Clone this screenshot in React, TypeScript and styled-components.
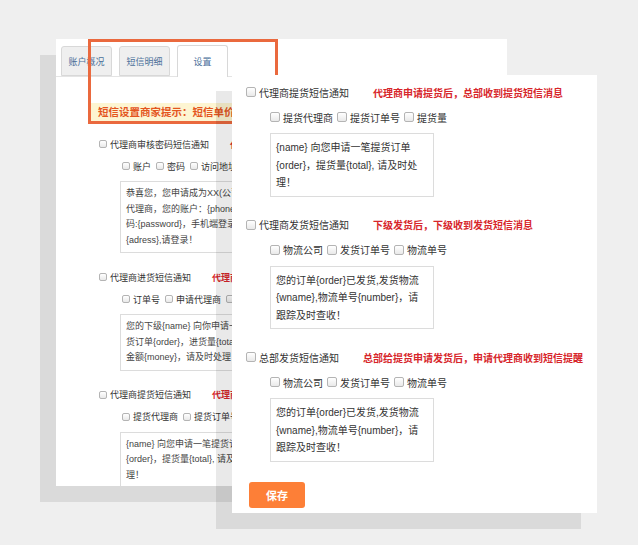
import React from "react";
import styled, { createGlobalStyle } from "styled-components";

type Size = "sm" | "md";

const GlobalStyle = createGlobalStyle`
  html, body { margin: 0; padding: 0; background: #efefef; }
  body { font-family: "Liberation Sans", "Noto Sans CJK SC", sans-serif; }
  * { box-sizing: border-box; }
`;

const Canvas = styled.div`
  position: relative;
  width: 638px;
  height: 545px;
  overflow: hidden;
  background: #efefef;
`;

const Watermark = styled.span<{ $x: number; $y: number }>`
  position: absolute;
  left: ${(p) => p.$x}px;
  top: ${(p) => p.$y}px;
  font-size: 28px;
  font-weight: bold;
  color: rgba(0, 0, 0, 0.022);
  transform: rotate(-32deg);
  font-family: "Noto Sans CJK SC", sans-serif;
  pointer-events: none;
`;

const Window = styled.div<{ $x: number; $y: number; $w: number; $h: number; $z: number }>`
  position: absolute;
  left: ${(p) => p.$x}px;
  top: ${(p) => p.$y}px;
  width: ${(p) => p.$w}px;
  height: ${(p) => p.$h}px;
  z-index: ${(p) => p.$z};
  background: #fff;
  overflow: hidden;
  box-shadow: -16px 16px 0 rgba(0, 0, 0, 0.085);
`;

const TabBar = styled.div`
  display: flex;
  align-items: flex-end;
  gap: 7px;
  height: 38px;
  padding-left: 5px;
  border-bottom: 1px solid #e4e4e4;
`;

const Tab = styled.div<{ $active?: boolean }>`
  width: 51px;
  height: ${(p) => (p.$active ? 32 : 30)}px;
  margin-bottom: ${(p) => (p.$active ? -1 : 0)}px;
  display: flex;
  align-items: center;
  justify-content: center;
  border: 1px solid #d8d8d8;
  border-bottom: ${(p) => (p.$active ? "none" : "1px solid #d8d8d8")};
  border-radius: 3px 3px 0 0;
  background: ${(p) => (p.$active ? "#fff" : "#efefef")};
  color: #4b6f9a;
  font-size: 9px;
`;

const HighlightFrame = styled.div`
  position: absolute;
  left: 32px;
  top: 0;
  width: 190px;
  height: 85px;
  border: 3px solid #ea693e;
  z-index: 2;
`;

const Notice = styled.div`
  margin: 26px 0 0 34px;
  height: 18px;
  line-height: 18px;
  padding-left: 8px;
  background: #fdf5d2;
  color: #e4561e;
  font-size: 10.5px;
  font-weight: bold;
  white-space: nowrap;
`;

const Sections = styled.div<{ $size: Size }>`
  display: flex;
  flex-direction: column;
  gap: ${(p) => (p.$size === "sm" ? 18 : 21)}px;
  padding-left: ${(p) => (p.$size === "sm" ? 43 : 14)}px;
  margin-top: ${(p) => (p.$size === "sm" ? 17 : 10)}px;
`;

const Section = styled.div`
  display: flex;
  flex-direction: column;
  align-items: flex-start;
`;

const Row = styled.div<{ $size: Size }>`
  display: flex;
  align-items: center;
  height: ${(p) => (p.$size === "sm" ? 12 : 14)}px;
  font-size: ${(p) => (p.$size === "sm" ? 9 : 10)}px;
  color: #333;
  white-space: nowrap;
`;

const SubRow = styled(Row)`
  margin-top: ${(p) => (p.$size === "sm" ? 10 : 11)}px;
  margin-left: ${(p) => (p.$size === "sm" ? 23 : 24)}px;
`;

const Check = styled.span<{ $size: Size }>`
  display: inline-block;
  flex: none;
  width: ${(p) => (p.$size === "sm" ? 8 : 10)}px;
  height: ${(p) => (p.$size === "sm" ? 8 : 10)}px;
  border: 1px solid #b4b4b4;
  border-radius: 2px;
  background: linear-gradient(#ffffff, #e9e9e9);
  margin-right: 3px;
`;

const Option = styled.span<{ $size: Size }>`
  display: inline-flex;
  align-items: center;
  margin-right: ${(p) => (p.$size === "sm" ? 5 : 4)}px;
`;

const Hint = styled.span<{ $size: Size }>`
  margin-left: ${(p) => (p.$size === "sm" ? 21 : 24)}px;
  color: #d7262b;
  font-weight: bold;
`;

const TextBox = styled.div<{ $size: Size }>`
  margin-top: 9px;
  margin-left: ${(p) => (p.$size === "sm" ? 21 : 24)}px;
  width: ${(p) => (p.$size === "sm" ? 160 : 164)}px;
  padding: ${(p) => (p.$size === "sm" ? "4px 5px" : "5px 5px 4px")};
  border: 1px solid #dcdcdc;
  font-size: ${(p) => (p.$size === "sm" ? 9 : 10)}px;
  line-height: ${(p) => (p.$size === "sm" ? 15.5 : 17.5)}px;
  color: ${(p) => (p.$size === "sm" ? "#444" : "#333")};
  white-space: nowrap;
  overflow: hidden;
`;

const SaveButton = styled.button`
  margin: 20px 0 0 17px;
  width: 56px;
  height: 26px;
  border: none;
  border-radius: 3px;
  background: #fd7f37;
  color: #fff;
  font-family: "Liberation Sans", "Noto Sans CJK SC", sans-serif;
  font-size: 11px;
  font-weight: bold;
  padding: 0;
`;

type SectionData = {
  title: string;
  hint: string;
  options: string[];
  lines: string[];
};

const backSections: SectionData[] = [
  {
    title: "代理商审核密码短信通知",
    hint: "代理商审核通过后，代理商收到短信通知",
    options: ["账户", "密码", "访问地址"],
    lines: [
      "恭喜您，您申请成为XX(公司)的",
      "代理商，您的账户：{phone}，密",
      "码:{password}，手机端登录地址",
      "{adress},请登录！",
    ],
  },
  {
    title: "代理商进货短信通知",
    hint: "代理商申请进货后，上级收到短信",
    options: ["订单号", "申请代理商", "进货量"],
    lines: [
      "您的下级{name} 向你申请一笔进",
      "货订单{order}，进货量{total}，",
      "金额{money}，请及时处理！",
    ],
  },
  {
    title: "代理商提货短信通知",
    hint: "代理商申请提货后，总部收到提货短信消息",
    options: ["提货代理商", "提货订单号", "提货量"],
    lines: ["{name} 向您申请一笔提货订单", "{order}，提货量{total}, 请及时处", "理！"],
  },
];

const shipLines = ["您的订单{order}已发货,发货物流", "{wname},物流单号{number}，请", "跟踪及时查收！"];

const frontSections: SectionData[] = [
  {
    title: "代理商提货短信通知",
    hint: "代理商申请提货后，总部收到提货短信消息",
    options: ["提货代理商", "提货订单号", "提货量"],
    lines: ["{name} 向您申请一笔提货订单", "{order}，提货量{total}, 请及时处", "理！"],
  },
  {
    title: "代理商发货短信通知",
    hint: "下级发货后，下级收到发货短信消息",
    options: ["物流公司", "发货订单号", "物流单号"],
    lines: shipLines,
  },
  {
    title: "总部发货短信通知",
    hint: "总部给提货申请发货后，申请代理商收到短信提醒",
    options: ["物流公司", "发货订单号", "物流单号"],
    lines: shipLines,
  },
];

function SmsSection({ data, size }: { data: SectionData; size: Size }) {
  return (
    <Section>
      <Row $size={size}>
        <Check $size={size} />
        <span>{data.title}</span>
        <Hint $size={size}>{data.hint}</Hint>
      </Row>
      <SubRow $size={size}>
        {data.options.map((o) => (
          <Option key={o} $size={size}>
            <Check $size={size} />
            {o}
          </Option>
        ))}
      </SubRow>
      <TextBox $size={size}>
        {data.lines.map((l, i) => (
          <div key={i}>{l}</div>
        ))}
      </TextBox>
    </Section>
  );
}

export default function App() {
  return (
    <>
      <GlobalStyle />
      <Canvas>
        <Watermark $x={602} $y={86}>微</Watermark>
        <Watermark $x={602} $y={246}>微</Watermark>
        <Watermark $x={602} $y={400}>微</Watermark>
        <Watermark $x={14} $y={296}>微</Watermark>

        <Window $x={56} $y={39} $w={451} $h={447} $z={1}>
          <HighlightFrame />
          <TabBar>
            <Tab>账户概况</Tab>
            <Tab>短信明细</Tab>
            <Tab $active>设置</Tab>
          </TabBar>
          <Notice>短信设置商家提示：短信单价为0.1元/条，请及时充值</Notice>
          <Sections $size="sm">
            {backSections.map((s) => (
              <SmsSection key={s.title} data={s} size="sm" />
            ))}
          </Sections>
        </Window>

        <Window $x={232} $y={75} $w={365} $h={438} $z={3}>
          <Sections $size="md">
            {frontSections.map((s) => (
              <SmsSection key={s.title} data={s} size="md" />
            ))}
          </Sections>
          <SaveButton>保存</SaveButton>
        </Window>
      </Canvas>
    </>
  );
}
